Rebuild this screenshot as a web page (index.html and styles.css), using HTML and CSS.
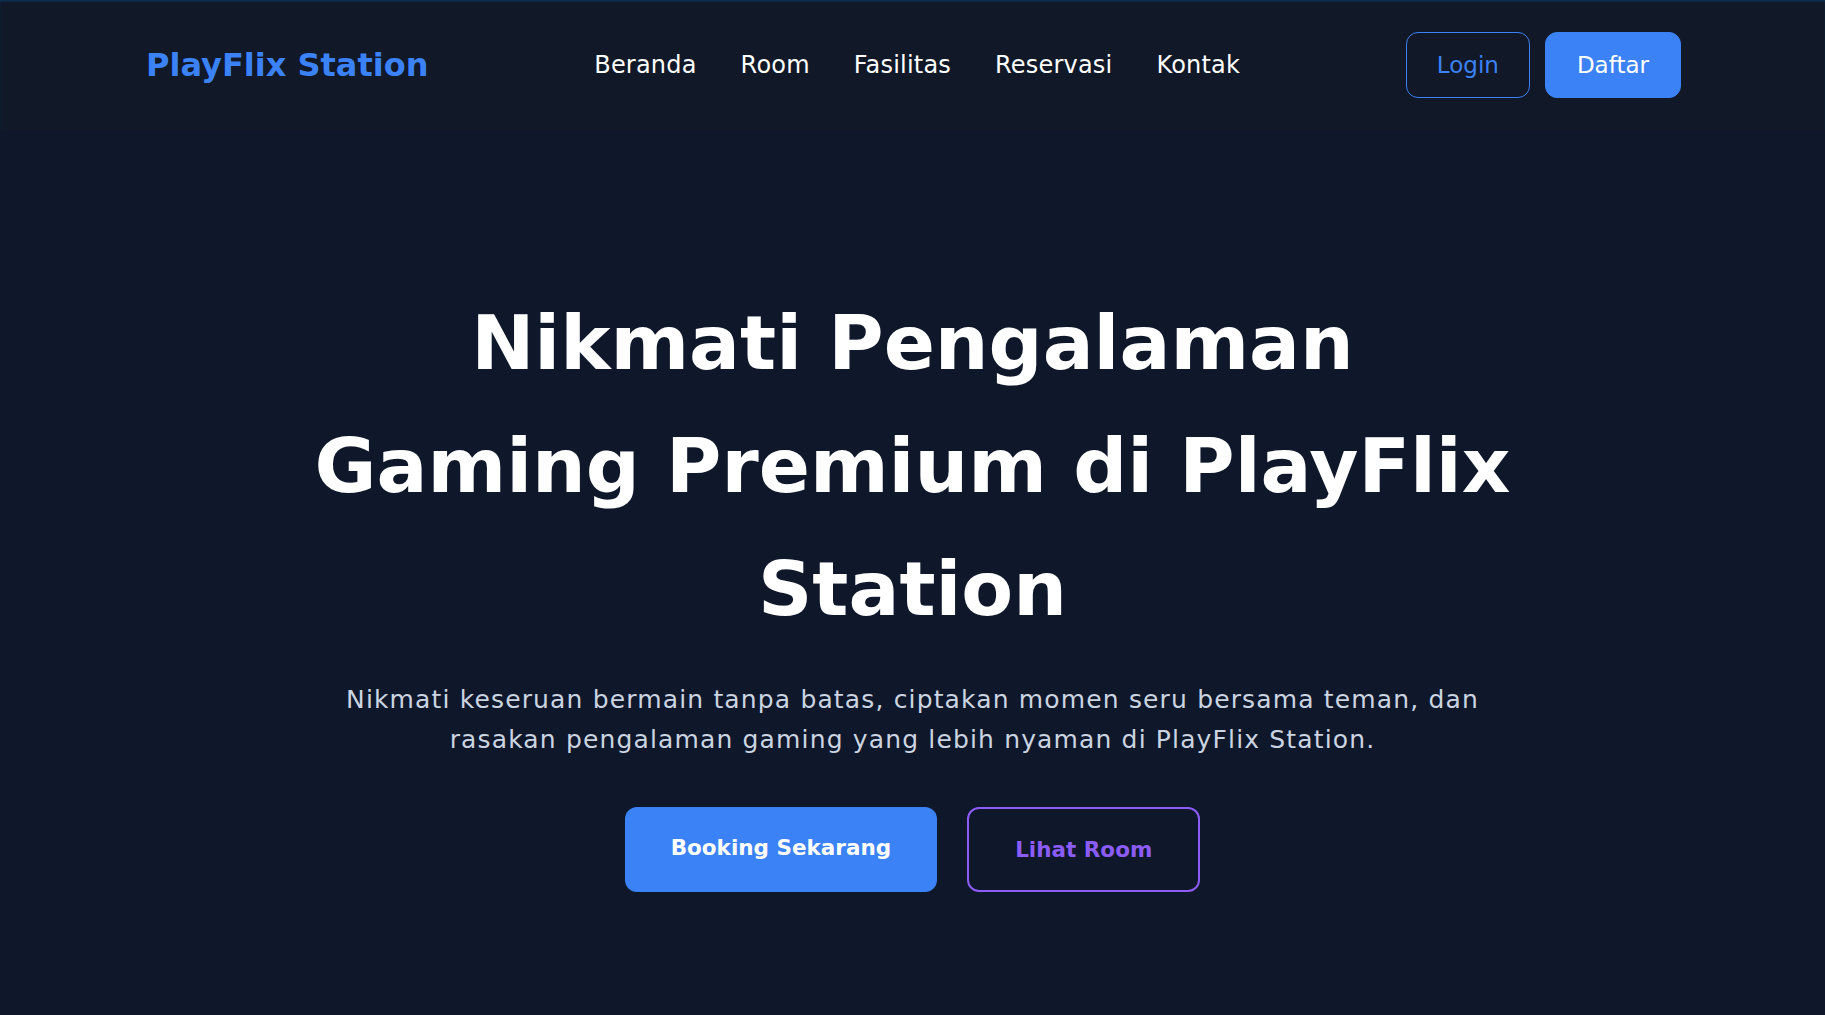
FILE: index.html
```html
<!DOCTYPE html>
<html lang="id">
<head>
<meta charset="utf-8">
<title>PlayFlix Station</title>
<link rel="stylesheet" href="styles.css">
</head>
<body>
<div class="page">
  <header class="site-header">
    <a class="brand" href="#">PlayFlix Station</a>
    <nav class="main-nav">
      <a href="#">Beranda</a>
      <a href="#">Room</a>
      <a href="#">Fasilitas</a>
      <a href="#">Reservasi</a>
      <a href="#">Kontak</a>
    </nav>
    <div class="auth">
      <a class="auth-btn auth-login" href="#">Login</a>
      <a class="auth-btn auth-register" href="#">Daftar</a>
    </div>
  </header>
  <main class="hero">
    <h1 class="hero-title">Nikmati Pengalaman<br>Gaming Premium di PlayFlix<br>Station</h1>
    <p class="hero-text">Nikmati keseruan bermain tanpa batas, ciptakan momen seru bersama teman, dan<br>rasakan pengalaman gaming yang lebih nyaman di PlayFlix Station.</p>
    <div class="hero-actions">
      <a class="cta cta-primary" href="#">Booking Sekarang</a>
      <a class="cta cta-secondary" href="#">Lihat Room</a>
    </div>
  </main>
</div>
</body>
</html>
```

FILE: styles.css
```css
* {
  box-sizing: border-box;
}

html, body {
  margin: 0;
  padding: 0;
  background: #0f172a;
}

body {
  font-family: "DejaVu Sans", "Liberation Sans", sans-serif;
  color: #ffffff;
}

a {
  text-decoration: none;
  color: inherit;
}

.page {
  min-height: 100vh;
  background: #0f172a;
}

.site-header {
  display: flex;
  align-items: center;
  justify-content: space-between;
  padding: 32px 144px 32px 146px;
  background: #111827;
  box-shadow: inset 0 2px 3px -1px rgba(10, 80, 140, 0.6);
}

.brand {
  font-size: 32px;
  font-weight: 700;
  color: #3b82f6;
  line-height: 40px;
}

.main-nav {
  display: flex;
  gap: 44px;
}

.main-nav a {
  font-size: 24px;
  line-height: 34px;
  letter-spacing: 0.2px;
  color: #ffffff;
}

.auth {
  display: flex;
  gap: 15px;
}

.auth-btn {
  display: block;
  font-size: 23px;
  line-height: 34px;
  padding: 15px 30px;
  border: 1px solid #3b82f6;
  border-radius: 12px;
}

.auth-login {
  color: #3b82f6;
  background: transparent;
}

.auth-register {
  color: #ffffff;
  background: #3b82f6;
  padding: 15px 31px;
}

.hero {
  display: flex;
  flex-direction: column;
  align-items: center;
  text-align: center;
  padding: 152px 8% 0;
}

.hero-title {
  margin: 0;
  font-size: 75.5px;
  font-weight: 700;
  line-height: 123px;
  color: #ffffff;
}

.hero-text {
  margin: 29px 0 0;
  font-size: 25px;
  line-height: 40px;
  letter-spacing: 1.15px;
  color: #cbd5e1;
}

.hero-actions {
  display: flex;
  gap: 30px;
  margin-top: 47px;
}

.cta {
  display: block;
  font-size: 21.5px;
  font-weight: 700;
  line-height: 33px;
  padding: 24px 44px;
  border: 2px solid transparent;
  border-radius: 12px;
}

.cta-primary {
  background: #3b82f6;
  color: #ffffff;
  padding: 22px 44px 26px;
}

.cta-secondary {
  border-color: #8b5cf6;
  color: #8b5cf6;
  padding: 24px 46px;
}
```
